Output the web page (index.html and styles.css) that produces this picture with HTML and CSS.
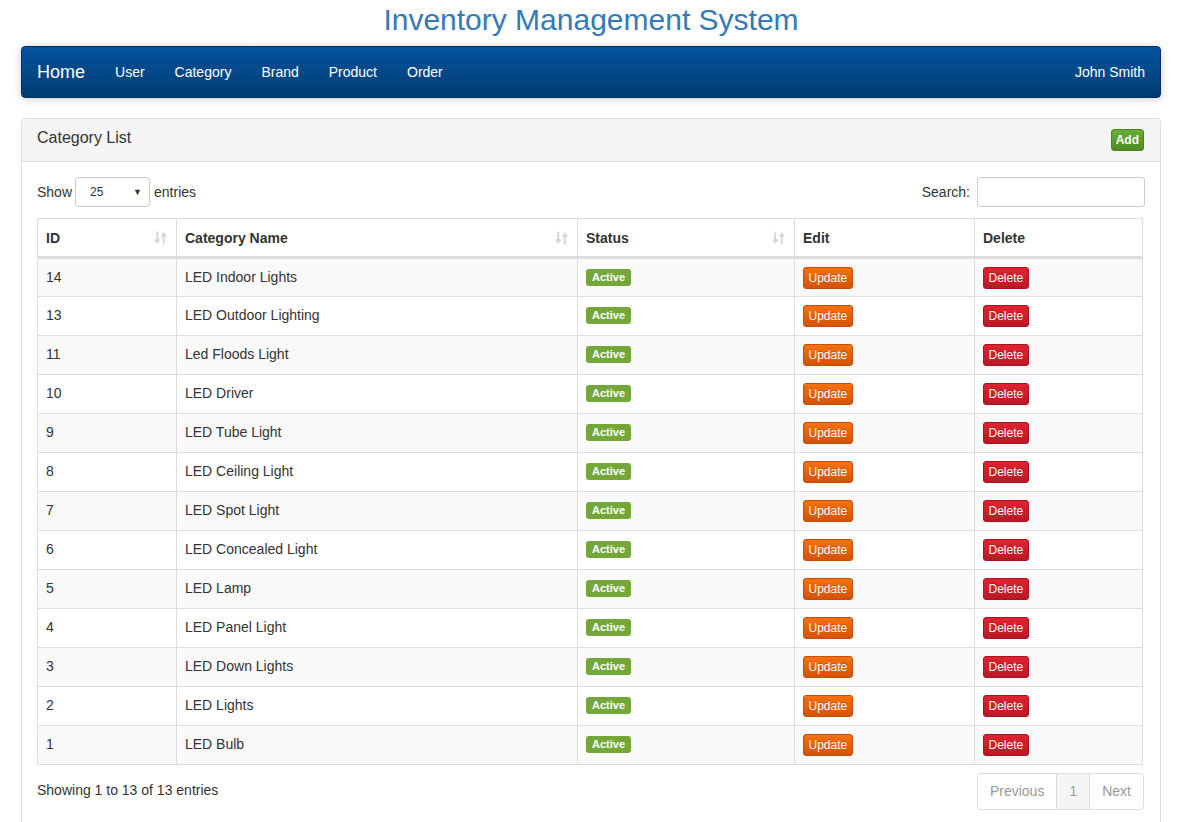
FILE: index.html
```html
<!DOCTYPE html>
<html>
<head>
<meta charset="utf-8">
<title>Inventory Management System</title>
<link rel="stylesheet" href="styles.css">
</head>
<body>
<div class="container">
  <h1 class="title">Inventory Management System</h1>
  <nav class="navbar">
    <div class="nav-left">
      <a class="brand" href="#">Home</a>
      <a class="nav-link" href="#">User</a>
      <a class="nav-link" href="#">Category</a>
      <a class="nav-link" href="#">Brand</a>
      <a class="nav-link" href="#">Product</a>
      <a class="nav-link" href="#">Order</a>
    </div>
    <a class="nav-link user" href="#">John Smith</a>
  </nav>

  <div class="panel">
    <div class="panel-heading">
      <span class="panel-title">Category List</span>
      <button class="btn-add">Add</button>
    </div>
    <div class="panel-body">
      <div class="controls">
        <div class="length">Show <span class="select">25<span class="caret">▼</span></span> entries</div>
        <div class="search">Search: <span class="input"></span></div>
      </div>
      <table class="table">
        <thead>
          <tr>
            <th class="c-id sortable">ID<svg class="sort" viewBox="0 0 14 16"><path d="M3.5 1v11M1 9.5l2.5 3 2.5-3M10.5 15V4M8 6.5l2.5-3 2.5 3" stroke="#d8d8d8" stroke-width="2.2" fill="none"/></svg></th>
            <th class="c-name sortable">Category Name<svg class="sort" viewBox="0 0 14 16"><path d="M3.5 1v11M1 9.5l2.5 3 2.5-3M10.5 15V4M8 6.5l2.5-3 2.5 3" stroke="#d8d8d8" stroke-width="2.2" fill="none"/></svg></th>
            <th class="c-status sortable">Status<svg class="sort" viewBox="0 0 14 16"><path d="M3.5 1v11M1 9.5l2.5 3 2.5-3M10.5 15V4M8 6.5l2.5-3 2.5 3" stroke="#d8d8d8" stroke-width="2.2" fill="none"/></svg></th>
            <th class="c-edit">Edit</th>
            <th class="c-del">Delete</th>
          </tr>
        </thead>
        <tbody>
          <tr><td>14</td><td>LED Indoor Lights</td><td><span class="label">Active</span></td><td><span class="btn-upd">Update</span></td><td><span class="btn-del">Delete</span></td></tr>
          <tr><td>13</td><td>LED Outdoor Lighting</td><td><span class="label">Active</span></td><td><span class="btn-upd">Update</span></td><td><span class="btn-del">Delete</span></td></tr>
          <tr><td>11</td><td>Led Floods Light</td><td><span class="label">Active</span></td><td><span class="btn-upd">Update</span></td><td><span class="btn-del">Delete</span></td></tr>
          <tr><td>10</td><td>LED Driver</td><td><span class="label">Active</span></td><td><span class="btn-upd">Update</span></td><td><span class="btn-del">Delete</span></td></tr>
          <tr><td>9</td><td>LED Tube Light</td><td><span class="label">Active</span></td><td><span class="btn-upd">Update</span></td><td><span class="btn-del">Delete</span></td></tr>
          <tr><td>8</td><td>LED Ceiling Light</td><td><span class="label">Active</span></td><td><span class="btn-upd">Update</span></td><td><span class="btn-del">Delete</span></td></tr>
          <tr><td>7</td><td>LED Spot Light</td><td><span class="label">Active</span></td><td><span class="btn-upd">Update</span></td><td><span class="btn-del">Delete</span></td></tr>
          <tr><td>6</td><td>LED Concealed Light</td><td><span class="label">Active</span></td><td><span class="btn-upd">Update</span></td><td><span class="btn-del">Delete</span></td></tr>
          <tr><td>5</td><td>LED Lamp</td><td><span class="label">Active</span></td><td><span class="btn-upd">Update</span></td><td><span class="btn-del">Delete</span></td></tr>
          <tr><td>4</td><td>LED Panel Light</td><td><span class="label">Active</span></td><td><span class="btn-upd">Update</span></td><td><span class="btn-del">Delete</span></td></tr>
          <tr><td>3</td><td>LED Down Lights</td><td><span class="label">Active</span></td><td><span class="btn-upd">Update</span></td><td><span class="btn-del">Delete</span></td></tr>
          <tr><td>2</td><td>LED Lights</td><td><span class="label">Active</span></td><td><span class="btn-upd">Update</span></td><td><span class="btn-del">Delete</span></td></tr>
          <tr><td>1</td><td>LED Bulb</td><td><span class="label">Active</span></td><td><span class="btn-upd">Update</span></td><td><span class="btn-del">Delete</span></td></tr>
        </tbody>
      </table>
      <div class="footer">
        <div class="info">Showing 1 to 13 of 13 entries</div>
        <div class="pagination">
          <span class="pg">Previous</span><span class="pg active">1</span><span class="pg">Next</span>
        </div>
      </div>
    </div>
  </div>
</div>
</body>
</html>
```

FILE: styles.css
```css
* { box-sizing: border-box; }
html, body { margin: 0; padding: 0; }
body {
  font-family: "Liberation Sans", Arial, sans-serif;
  font-size: 14px;
  line-height: 20px;
  color: #333;
  background: #fff;
}
.container {
  width: 1140px;
  margin-left: 21px;
}
.title {
  margin: 0;
  padding-top: 3px;
  height: 46px;
  text-align: center;
  font-weight: normal;
  font-size: 30px;
  line-height: 34px;
  color: #337ab7;
}
.navbar {
  height: 52px;
  display: flex;
  justify-content: space-between;
  align-items: center;
  background: linear-gradient(to bottom, #05529d 0%, #034685 60%, #023a70 100%);
  border: 1px solid #022e5c;
  border-radius: 4px;
  box-shadow: 0 1px 8px rgba(0,0,0,0.2);
  margin-bottom: 20px;
}
.nav-left { display: flex; align-items: center; }
.navbar a { color: #fff; text-decoration: none; }
.brand {
  font-size: 18px;
  padding: 0 15px;
  line-height: 50px;
}
.nav-link {
  padding: 0 15px;
  line-height: 50px;
}
.nav-link.user { padding-right: 15px; }

.panel {
  border: 1px solid #ddd;
  border-radius: 4px;
  background: #fff;
  box-shadow: 0 1px 1px rgba(0,0,0,0.05);
}
.panel-heading {
  height: 43px;
  background: #f5f5f5;
  border-bottom: 1px solid #ddd;
  border-radius: 3px 3px 0 0;
  display: flex;
  justify-content: space-between;
  align-items: center;
  padding: 0 15px;
}
.panel-title {
  font-size: 16px;
  color: #333;
  margin-top: -5px;
}
.btn-add {
  font-family: "Liberation Sans", Arial, sans-serif;
  font-size: 12px;
  font-weight: bold;
  color: #fff;
  background: linear-gradient(to bottom, #6aae33, #4e8c24);
  border: 1px solid #4a8522;
  border-radius: 3px;
  height: 22px;
  padding: 0 4px;
  line-height: 18px;
  margin-right: 1px;
}
.panel-body {
  padding: 15px 15px 25px 15px;
}
.controls {
  display: flex;
  justify-content: space-between;
  align-items: center;
  height: 30px;
  margin-bottom: 11px;
}
.length, .search { display: flex; align-items: center; }
.select {
  display: inline-flex;
  justify-content: space-between;
  align-items: center;
  width: 75px;
  height: 30px;
  border: 1px solid #ccc;
  border-radius: 3px;
  margin: 0 4px 0 3px;
  padding: 0 7px 0 14px;
  font-size: 12px;
}
.caret { font-size: 9px; color: #333; }
.input {
  display: inline-block;
  width: 168px;
  height: 30px;
  border: 1px solid #ccc;
  border-radius: 3px;
  margin-left: 7px;
}
.table {
  width: 1106px;
  border-collapse: collapse;
  border: 1px solid #ddd;
}
.table th, .table td {
  border: 1px solid #ddd;
  padding: 8px;
  text-align: left;
  vertical-align: middle;
}
.table th {
  font-weight: bold;
  border-bottom: 3px solid #ddd;
  height: 39px;
  position: relative;
}
.table td {
  height: 39px;
  vertical-align: top;
  padding: 8px 8px 0 8px;
}
.table tbody tr:nth-child(odd) td { background: #f9f9f9; }
.c-id { width: 139px; }
.c-name { width: 401px; }
.c-status { width: 217px; }
.c-edit { width: 180px; }
.sort {
  position: absolute;
  right: 9px;
  top: 11px;
  width: 13px;
  height: 16px;
}
.label {
  display: inline-block;
  font-size: 11px;
  font-weight: bold;
  color: #fff;
  background: #73a839;
  border-radius: 3px;
  padding: 0 6px;
  line-height: 17px;
  height: 17px;
  vertical-align: top;
  margin-top: 2px;
}
.btn-upd, .btn-del {
  display: inline-block;
  font-size: 12px;
  color: #fff;
  border-radius: 3px;
  padding: 0 4.5px;
  height: 22px;
  line-height: 20px;
  vertical-align: top;
  margin-top: 0;
  text-shadow: 0 -1px 0 rgba(0,0,0,0.2);
}
.btn-upd {
  background: linear-gradient(to bottom, #f7710e, #d35208);
  border: 1px solid #c44d07;
}
.btn-del {
  background: linear-gradient(to bottom, #e12330, #bc1826);
  border: 1px solid #a81421;
}
.footer {
  display: flex;
  justify-content: space-between;
  align-items: flex-start;
  margin-top: 8px;
}
.info { padding-top: 7px; }
.pagination {
  display: flex;
  border: 1px solid #ddd;
  border-radius: 4px;
  margin-right: 1px;
}
.pg {
  padding: 0 12px;
  line-height: 35px;
  color: #999;
  border-left: 1px solid #ddd;
}
.pg:first-child { border-left: none; }
.pg.active { background: #f5f5f5; }
```
